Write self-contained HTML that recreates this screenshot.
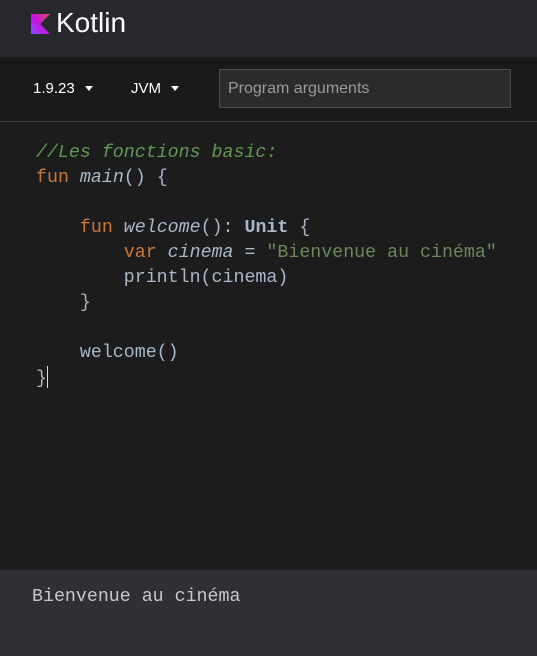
<!DOCTYPE html>
<html><head><style>
body{margin:0;width:537px;height:656px;background:#1c1c1d;font-family:"Liberation Sans",sans-serif;overflow:hidden;position:relative}
.hdr{position:absolute;top:0;left:0;width:537px;height:57px;background:#27282c}
.logo{position:absolute;left:31px;top:14px}
.kt{position:absolute;left:56px;top:7px;color:#fff;font-size:28px}
.tb{position:absolute;top:57px;left:0;width:537px;height:64px;background:#19191a;border-bottom:1px solid #3a3a3c}
.sel{position:absolute;top:23px;color:#fff;font-size:15px}
.sel:after{content:"";position:absolute;right:-18px;top:6px;border-left:4px solid transparent;border-right:4px solid transparent;border-top:5px solid #fff}
.inp{position:absolute;left:219px;top:12px;width:292px;height:39px;box-sizing:border-box;border:1px solid #4a4a4c;background:#2b2b2d;color:#9a9a9c;font-size:16px;padding:10px 8px}
.code{position:absolute;left:36px;top:141px;font-family:"Liberation Mono",monospace;font-size:18.3px;line-height:25px;color:#a9b7c6;white-space:pre}
.c{color:#629755;font-style:italic}.k{color:#cc7832}.i{font-style:italic}.s{color:#6a8759}.b{font-weight:bold}
.cur{display:inline-block;width:1px;height:22px;background:#ddd;vertical-align:-5px}
.out{position:absolute;left:0;top:570px;width:537px;height:86px;background:#2f3034}
.out div{position:absolute;left:32px;top:17px;font-family:"Liberation Mono",monospace;font-size:18.3px;color:#c8c8c8}
</style></head><body>
<div class="hdr">
<svg class="logo" width="19" height="20" viewBox="0 0 19 20"><defs><linearGradient id="g" x1="0" y1="1" x2="1" y2="0"><stop offset="0" stop-color="#7f52ff"/><stop offset="0.5" stop-color="#c711e1"/><stop offset="1" stop-color="#e44857"/></linearGradient></defs><path d="M0 0H19L9.5 10L19 20H0Z" fill="url(#g)"/></svg>
<div class="kt">Kotlin</div>
</div>
<div class="tb">
<div class="sel" style="left:33px">1.9.23</div>
<div class="sel" style="left:131px">JVM</div>
<div class="inp">Program arguments</div>
</div>
<div class="code"><span class="c">//Les fonctions basic:</span>
<span class="k">fun</span> <span class="i">main</span>() {

    <span class="k">fun</span> <span class="i">welcome</span>(): <span class="b">Unit</span> {
        <span class="k">var</span> <span class="i">cinema</span> = <span class="s">"Bienvenue au cinéma"</span>
        println(cinema)
    }

    welcome()
}<span class="cur"></span></div>
<div class="out"><div>Bienvenue au cinéma</div></div>
</body></html>
